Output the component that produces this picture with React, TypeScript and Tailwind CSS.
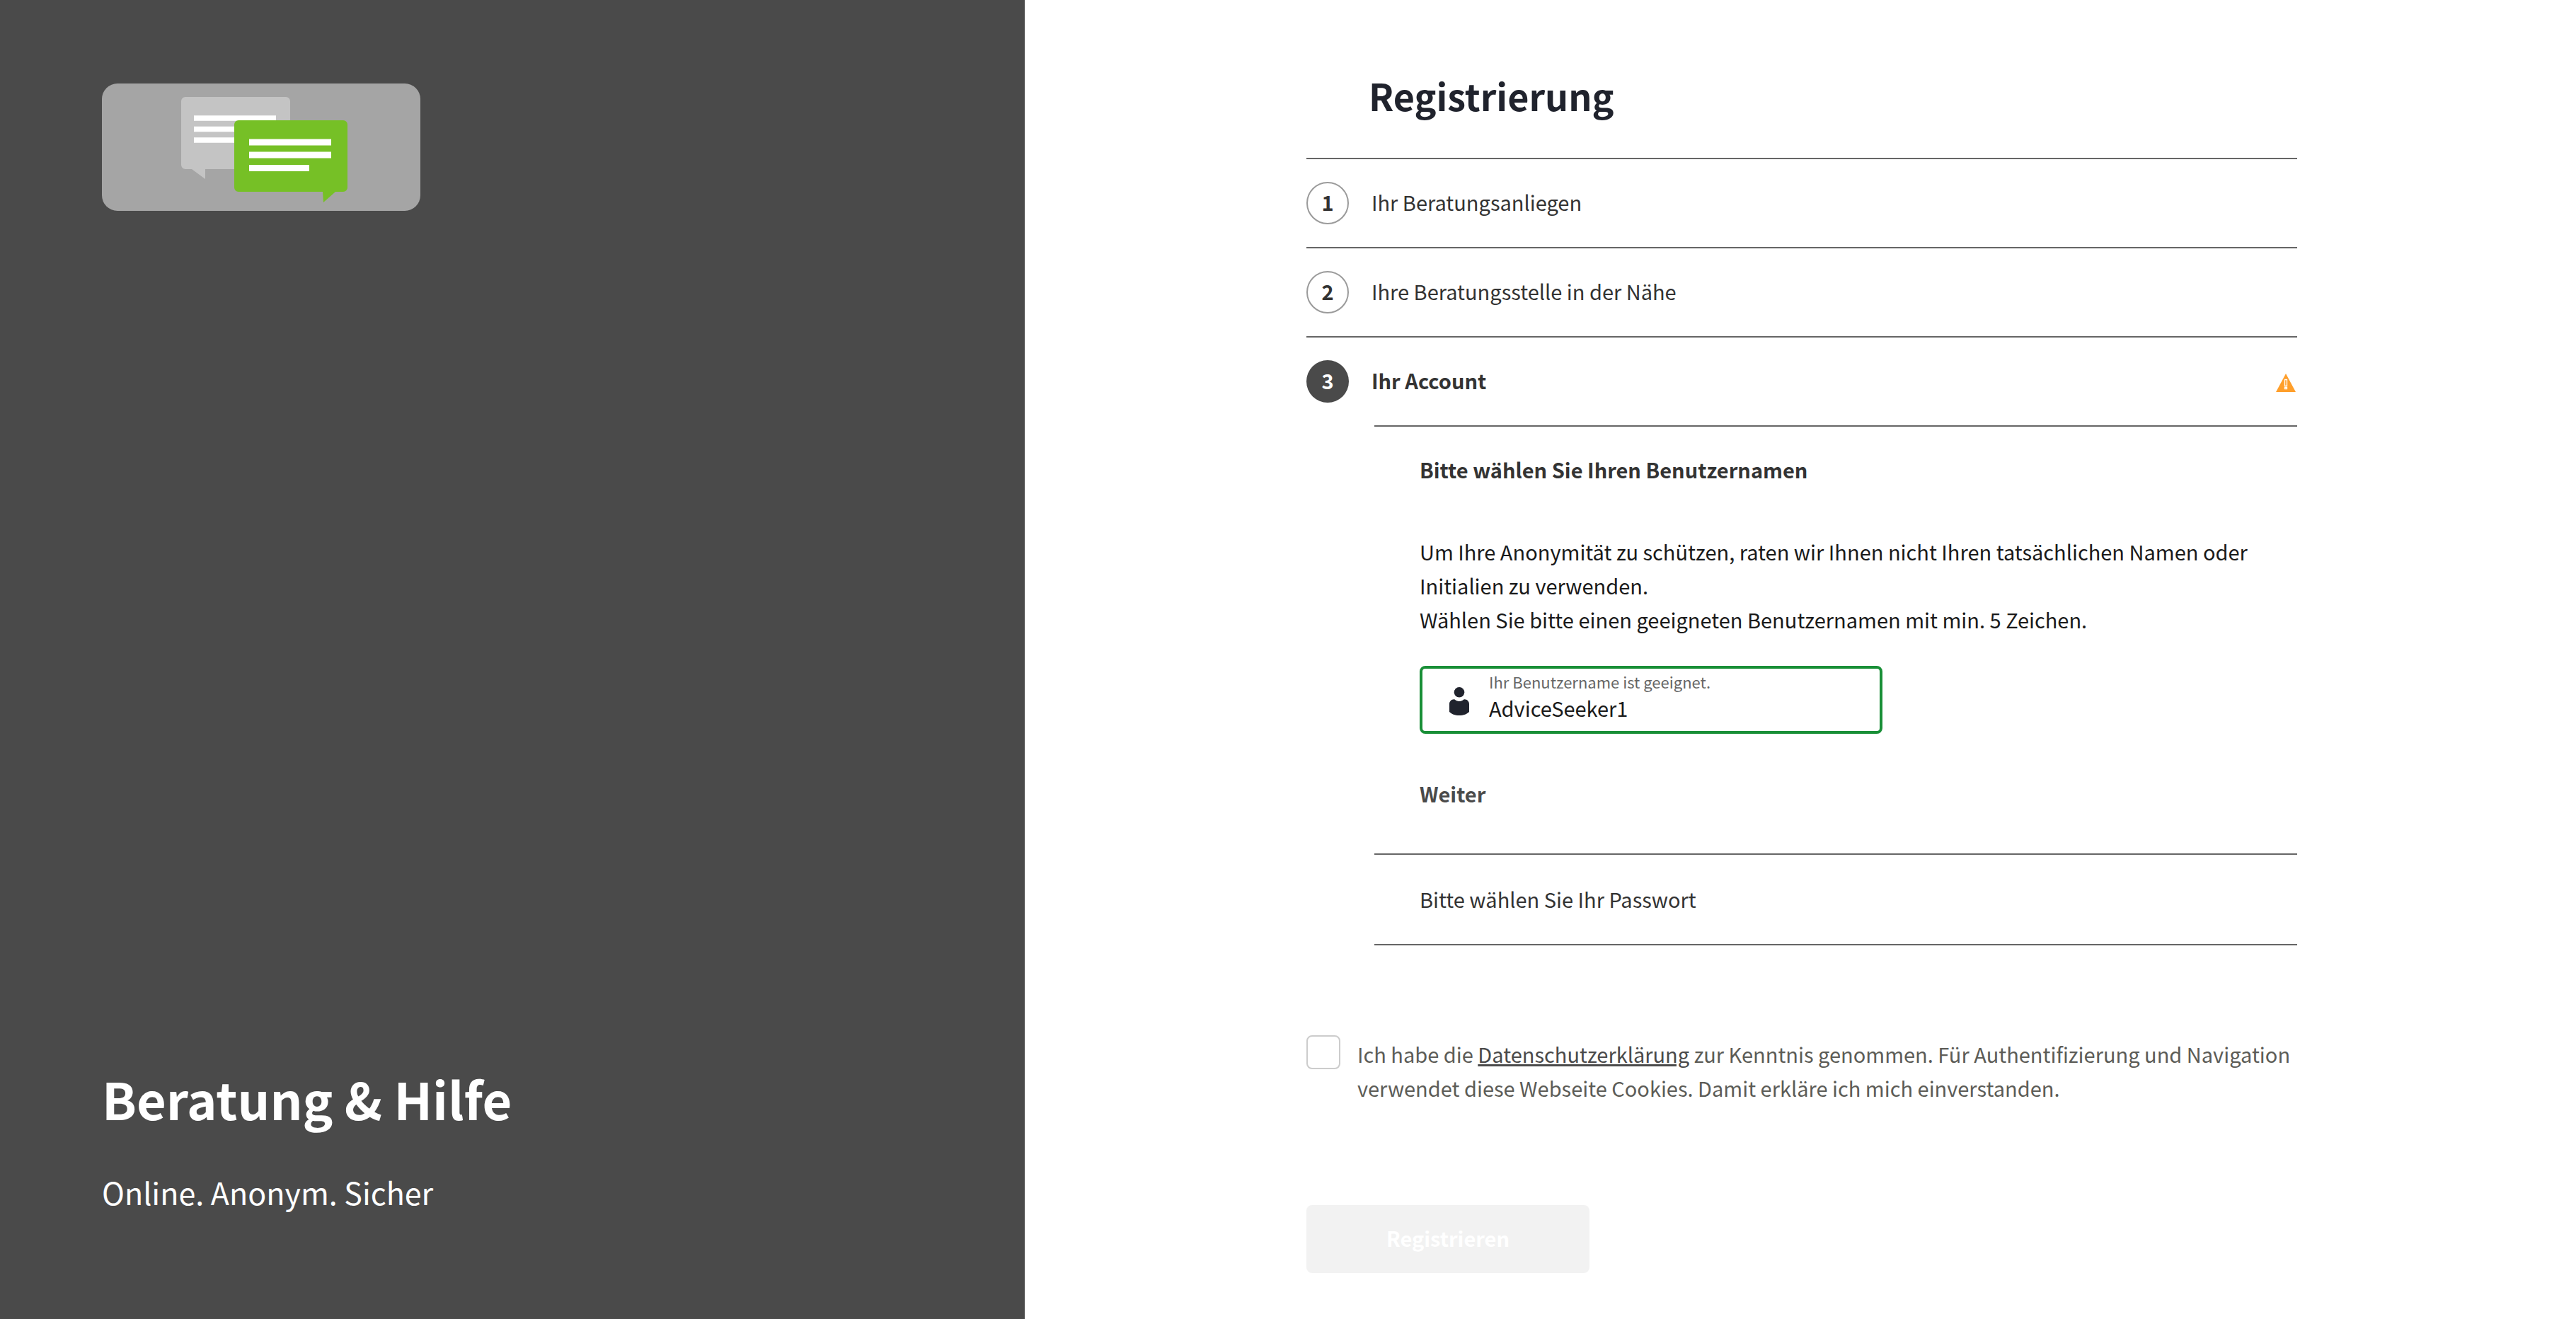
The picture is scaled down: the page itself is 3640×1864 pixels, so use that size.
import type { ReactNode } from 'react';

function Logo() {
  return (
    <svg viewBox="0 0 450 180" className="h-[180px] w-[450px] self-start" role="img" aria-label="Logo">
      <rect width="450" height="180" rx="22" fill="#a5a5a5" />
      <path fill="#c4c4c4" d="M118 19H260a6 6 0 0 1 6 6V115a6 6 0 0 1-6 6H146V135L127 121H118a6 6 0 0 1-6-6V25a6 6 0 0 1 6-6Z" />
      <path stroke="#fff" strokeWidth="7.4" d="M130 49H246M130 64.5H246M130 80H246" />
      <path fill="#76c026" d="M193 52H341a6 6 0 0 1 6 6V147a6 6 0 0 1-6 6H330L313 168L312 153H193a6 6 0 0 1-6-6V58a6 6 0 0 1 6-6Z" />
      <path stroke="#fff" strokeWidth="8.8" d="M208 83H324M208 101H324M208 119.500H293" />
    </svg>
  );
}

function PersonIcon() {
  return (
    <svg viewBox="0 0 28 40" className="mt-1 h-10 w-7 shrink-0" fill="#20232d" aria-hidden="true">
      <circle cx="14" cy="7.300" r="7.300" />
      <path d="M0 35V24C0 20 3 17.200 6.500 17.200C8.500 17.200 9.500 20 14 20S19.500 17.200 21.500 17.200C25 17.200 28 20 28 24V35C25 38 20 40 14 40S3 38 0 35Z" />
    </svg>
  );
}

function WarningIcon() {
  return (
    <svg viewBox="0 0 28 26" className="mt-1 mr-0.5 h-[26px] w-7" role="img" aria-label="Unvollständig">
      <path fill="#ff9f2b" d="M14 0L28 26H0Z" />
      <path fill="#ff9f2b" stroke="#fff" strokeWidth="1.3" d="M12.500 8.500H15.500V17.500H12.500ZM12.500 19.500H15.500V21.500H12.500Z" />
    </svg>
  );
}

function Step({ number, active, icon, children }: { number: number; active?: boolean; icon?: ReactNode; children: ReactNode }) {
  return (
    <h3 className={active ? 'font-bold' : 'font-normal'}>
      <button type="button" className="flex w-full items-center py-8 text-left text-[#333333]">
        <span
          className={
            active
              ? 'flex size-[60px] items-center justify-center rounded-full bg-[#4a4a4a] pb-1 font-bold text-white'
              : 'flex size-[60px] items-center justify-center rounded-full border-2 border-[#9b9b9b] pb-1 font-bold'
          }
        >
          {number}
        </span>
        <span className="ml-8 grow pb-1">{children}</span>
        {icon}
      </button>
    </h3>
  );
}

export default function App() {
  return (
    <div className="flex min-h-screen bg-white font-['Noto_Sans_CJK_SC','Noto_Sans',sans-serif] text-[29px] leading-[48px] text-[#1a1a1a]">
      <aside className="flex w-[39.78%] shrink-0 flex-col justify-between bg-[#4a4a4a] px-36 pt-[118px] pb-37 text-white">
        <Logo />
        <div>
          <h1 className="text-[72px] leading-[88px] font-bold">Beratung &amp; Hilfe</h1>
          <p className="mt-14 text-[43px] leading-[64px]">Online. Anonym. Sicher</p>
        </div>
      </aside>

      <main className="flex grow justify-center pl-1">
        <form className="w-full max-w-[1400px] pt-[97px] pb-16">
          <h2 className="pl-[88px] text-[52px] leading-[76px] font-bold text-[#20232d]">Registrierung</h2>

          <ol className="mt-[50px] divide-y-2 divide-[#666666] border-t-2 border-[#666666]">
            <li>
              <Step number={1}>Ihr Beratungsanliegen</Step>
            </li>
            <li>
              <Step number={2}>Ihre Beratungsstelle in der Nähe</Step>
            </li>
            <li>
              <Step number={3} active icon={<WarningIcon />}>
                Ihr Account
              </Step>
              <div className="ml-24 divide-y-2 divide-[#666666] border-y-2 border-[#666666]">
                <section className="px-16 pt-9 pb-[61px]">
                  <h4 className="font-bold text-[#333333]">Bitte wählen Sie Ihren Benutzernamen</h4>
                  <p className="mt-17">
                    Um Ihre Anonymität zu schützen, raten wir Ihnen nicht Ihren tatsächlichen Namen oder Initialien zu verwenden.
                    <br />
                    Wählen Sie bitte einen geeigneten Benutzernamen mit min. 5 Zeichen.
                  </p>
                  <div className="mt-[42px] flex h-24 w-[654px] items-center gap-7 rounded-lg border-4 border-[#198f37] pr-6 pl-[38px]">
                    <PersonIcon />
                    <div className="flex grow flex-col pb-2">
                      <label htmlFor="username" className="text-[22px] leading-[30px] text-[#666666]">
                        Ihr Benutzername ist geeignet.
                      </label>
                      <input id="username" type="text" defaultValue="AdviceSeeker1" className="h-11 w-full bg-transparent outline-none" />
                    </div>
                  </div>
                  <button type="button" className="mt-15 block font-bold text-[#4a4a4a]">
                    Weiter
                  </button>
                </section>
                <h4 className="px-16 pt-[38px] pb-10 text-[#333333]">
                  <button type="button" className="block">
                    Bitte wählen Sie Ihr Passwort
                  </button>
                </h4>
              </div>
            </li>
          </ol>

          <div className="mt-[127px] flex items-start gap-6 text-[#5c5c57]">
            <input id="privacy" type="checkbox" className="size-12 shrink-0 appearance-none rounded-lg border-2 border-[#cccccc] bg-white checked:bg-[#4a4a4a]" />
            <label htmlFor="privacy" className="pt-0.5">
              Ich habe die{' '}
              <a href="#datenschutz" className="text-[#4a4a4a] underline decoration-3 underline-offset-2">
                Datenschutzerklärung
              </a>{' '}
              zur Kenntnis genommen. Für Authentifizierung und Navigation verwendet diese Webseite Cookies. Damit erkläre ich mich einverstanden.
            </label>
          </div>

          <button type="submit" disabled className="mt-[142px] block h-24 w-[400px] rounded-lg bg-[#f2f2f2] pb-1 font-bold text-white">
            Registrieren
          </button>
        </form>
      </main>
    </div>
  );
}
